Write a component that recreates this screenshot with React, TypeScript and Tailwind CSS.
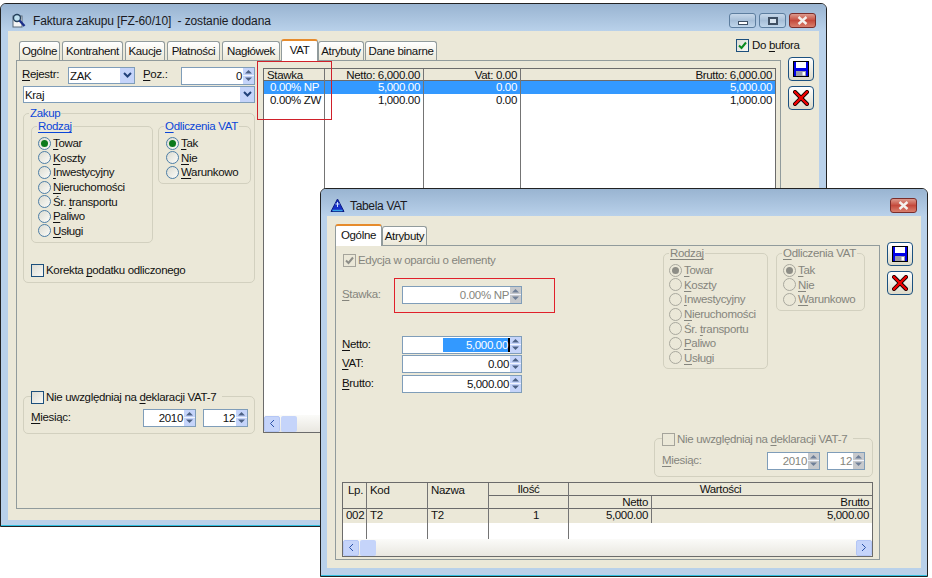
import React from "react";

const FONT = "font-['Liberation_Sans','Arial',sans-serif]";

function U({ children }: { children: React.ReactNode }) {
  return <span className="underline underline-offset-[2px]">{children}</span>;
}

function Radio({ checked, off }: { checked?: boolean; off?: boolean }) {
  return (
    <span
      className={`flex h-[13px] w-[13px] shrink-0 items-center justify-center rounded-full border ${
        off ? "border-[#a9a89e] bg-[#ebe8d8]" : "border-[#4d7ea6] bg-gradient-to-br from-[#dcdcd2] to-[#fbfbf8]"
      }`}
    >
      {checked && <span className={`h-[7px] w-[7px] rounded-full ${off ? "bg-[#8d8d86]" : "bg-[#0c7a1c]"}`} />}
    </span>
  );
}

function Check({ checked, off }: { checked?: boolean; off?: boolean }) {
  return (
    <span
      className={`flex h-[13px] w-[13px] shrink-0 items-center justify-center border ${
        off ? "border-[#a5a49b] bg-[#ebe8d8]" : "border-[#1c4f7c] bg-gradient-to-br from-[#dcdcd4] to-[#f8f8f4]"
      }`}
    >
      {checked && (
        <svg width="11" height="11" viewBox="0 0 11 11">
          <path d="M2 5.5 L4.5 8 L9 2.5" fill="none" stroke={off ? "#8e8e88" : "#0b8a1e"} strokeWidth="2" />
        </svg>
      )}
    </span>
  );
}

function SpinArrows({ off, flat }: { off?: boolean; flat?: boolean }) {
  return (
    <span className={`flex h-full w-[11px] shrink-0 flex-col ${flat ? "bg-[#c7c9cc]" : "bg-[#c5d4fa]"}`}>
      <svg width="11" height="15" viewBox="0 0 11 15">
        <path d="M5.5 2 L9 5.5 H2 Z" fill={off ? "#6f7f98" : "#4d6185"} />
        <path d="M0 7.5 H11" stroke="#f1f4fd" strokeWidth="1" />
        <path d="M5.5 13 L9 9.5 H2 Z" fill={off ? "#6f7f98" : "#4d6185"} />
      </svg>
    </span>
  );
}

function Spin({
  value,
  className,
  off,
  flat,
  selected,
}: {
  value: string;
  className: string;
  off?: boolean;
  flat?: boolean;
  selected?: boolean;
}) {
  return (
    <div className={`flex h-[18px] items-stretch border border-[#7f9db9] bg-white ${className}`}>
      <div className={`flex flex-1 items-center justify-end overflow-hidden ${off ? "text-[#85857d]" : ""}`}>
        {selected ? (
          <span className="flex h-[14px] w-[67px] items-center justify-end border-r-2 border-black bg-[#3399ff] text-white">
            {value}
          </span>
        ) : (
          <span className="pr-px">{value}</span>
        )}
      </div>
      <SpinArrows off={off} flat={flat} />
    </div>
  );
}

function Combo({ value, className }: { value: string; className: string }) {
  return (
    <div className={`flex h-[17px] items-stretch border border-[#7f9db9] bg-white ${className}`}>
      <span className="flex flex-1 items-center pl-px">{value}</span>
      <span className="flex w-[14px] items-center justify-center bg-[#c5d4fa]">
        <svg width="9" height="7" viewBox="0 0 9 7">
          <path d="M1 1 L4.5 4.5 L8 1" fill="none" stroke="#22427a" strokeWidth="2" />
        </svg>
      </span>
    </div>
  );
}

function Group({
  title,
  legend,
  className,
  blue,
  off,
  children,
}: {
  title?: React.ReactNode;
  legend?: React.ReactNode;
  className: string;
  blue?: boolean;
  off?: boolean;
  children?: React.ReactNode;
}) {
  return (
    <div className={`relative rounded-[5px] border border-[#d2d0bf] ${className}`}>
      {title && (
        <span
          className={`absolute -top-[7px] left-[5px] bg-[#ebe8d8] px-px leading-[13px] ${
            blue ? "text-[#0a46d8]" : off ? "text-[#85857d]" : ""
          }`}
        >
          {title}
        </span>
      )}
      {legend}
      {children}
    </div>
  );
}

function RadioList({
  items,
  off,
  marginClass,
}: {
  items: { label: React.ReactNode; checked?: boolean }[];
  off?: boolean;
  marginClass: string;
}) {
  return (
    <div className={`flex flex-col ${marginClass}`}>
      {items.map((it, i) => (
        <div key={i} className={`flex h-[14.6px] items-center gap-[2px] ${off ? "text-[#85857d]" : ""}`}>
          <Radio checked={it.checked} off={off} />
          <span>{it.label}</span>
        </div>
      ))}
    </div>
  );
}

const RODZAJ = [
  { label: <><U>T</U>owar</>, checked: true },
  { label: <><U>K</U>oszty</> },
  { label: <><U>I</U>nwestycyjny</> },
  { label: <><U>N</U>ieruchomości</> },
  { label: <>Śr. <U>t</U>ransportu</> },
  { label: <><U>P</U>aliwo</> },
  { label: <><U>U</U>sługi</> },
];
const ODLICZ = [
  { label: <><U>T</U>ak</>, checked: true },
  { label: <><U>N</U>ie</> },
  { label: <><U>W</U>arunkowo</> },
];

function Tab({ label, className, active }: { label: React.ReactNode; className: string; active?: boolean }) {
  return (
    <div
      className={
        active
          ? `relative z-10 -mb-px flex h-[22px] items-start justify-center rounded-t-[3px] border-x border-t-2 border-x-[#919b9c] border-t-[#e68b2c] bg-white pt-[2px] ${className}`
          : `flex h-[19px] items-center justify-center rounded-t-[3px] border-x border-t border-[#919b9c] bg-gradient-to-b from-white to-[#ebe8d8] ${className}`
      }
    >
      {label}
    </div>
  );
}

function WinButtons({ full }: { full?: boolean }) {
  return (
    <div className="flex gap-[3px]">
      {full && (
        <>
          <div className="flex h-[15px] w-[27px] items-end justify-center rounded-[3px] border border-[#5d7e9f] bg-gradient-to-b from-[#c7d8ea] via-[#a7bfd8] to-[#bfd5ea] pb-[2px]">
            <span className="h-[4px] w-[10px] border border-[#3e4f63] bg-white" />
          </div>
          <div className="flex h-[15px] w-[27px] items-center justify-center rounded-[3px] border border-[#5d7e9f] bg-gradient-to-b from-[#c7d8ea] via-[#a7bfd8] to-[#bfd5ea]">
            <span className="h-[8px] w-[10px] border-2 border-[#3e4f63] bg-[#d8e4f0]" />
          </div>
        </>
      )}
      <div className="flex h-[15px] w-[27px] items-center justify-center rounded-[3px] border border-[#7a2d2a] bg-gradient-to-b from-[#dc9a8e] via-[#c4493c] to-[#d97f6e]">
        <svg width="11" height="9" viewBox="0 0 11 9">
          <path d="M1.5 1 L9.5 8 M9.5 1 L1.5 8" stroke="#f4f1ee" strokeWidth="2.4" />
        </svg>
      </div>
    </div>
  );
}

function SaveButton() {
  return (
    <div className="flex h-[24px] w-[26px] items-center justify-center rounded-[4px] border border-[#1c5180] bg-gradient-to-b from-white to-[#dcd9c8]">
      <svg width="16" height="16" viewBox="0 0 16 16">
        <rect x="0.5" y="0.5" width="15" height="15" fill="#0000e8" stroke="#000" />
        <rect x="3" y="1" width="10" height="6" fill="#fff" />
        <rect x="3" y="10" width="10" height="5" fill="#9a9aa8" />
        <rect x="9.5" y="11" width="2.5" height="3.5" fill="#fff" />
      </svg>
    </div>
  );
}

function CloseButton() {
  return (
    <div className="flex h-[24px] w-[26px] items-center justify-center rounded-[4px] border border-[#1c5180] bg-gradient-to-b from-white to-[#dcd9c8]">
      <svg width="16" height="16" viewBox="0 0 16 16">
        <path d="M2 2 L14 14 M14 2 L2 14" stroke="#000" strokeWidth="4" strokeLinecap="square" />
        <path d="M2 2 L14 14 M14 2 L2 14" stroke="#f00000" strokeWidth="2.4" strokeLinecap="square" />
      </svg>
    </div>
  );
}

function ScrollBtn({ dir }: { dir: "l" | "r" }) {
  return (
    <span className="flex h-[16px] w-[16px] shrink-0 items-center justify-center rounded-[2px] border border-[#b4c6f5] bg-[#c5d4fa]">
      <svg width="6" height="9" viewBox="0 0 6 9">
        <path d={dir === "l" ? "M5 1 L1.5 4.5 L5 8" : "M1 1 L4.5 4.5 L1 8"} fill="none" stroke="#2b52a8" strokeWidth="1" />
      </svg>
    </span>
  );
}

const COL = "border-r border-[#747474]";
const MAIN_GRID = "grid grid-cols-[61px_99px_97px_1fr]";

function MainTable() {
  const rows = [
    { a: "0.00% NP", b: "5,000.00", c: "0.00", d: "5,000.00", sel: true },
    { a: "0.00% ZW", b: "1,000.00", c: "0.00", d: "1,000.00" },
  ];
  return (
    <div className="mt-[7px] flex h-[365px] w-[513px] flex-col overflow-hidden border border-[#6b6b6b] bg-white">
      <div className={`${MAIN_GRID} h-[12px] border-b border-[#6b6b6b] bg-[#ebe8d8] leading-[12px]`}>
        <span className={`${COL} pl-[3px]`}>Stawka</span>
        <span className={`${COL} pr-[3px] text-right`}>Netto: 6,000.00</span>
        <span className={`${COL} pr-[3px] text-right`}>Vat: 0.00</span>
        <span className="pr-[3px] text-right">Brutto: 6,000.00</span>
      </div>
      {rows.map((r) => (
        <div key={r.a} className={`${MAIN_GRID} h-[13px] leading-[13px] ${r.sel ? "bg-[#3399ff] text-white" : ""}`}>
          <span className={`${COL} pl-[6px]`}>{r.a}</span>
          <span className={`${COL} pr-[3px] text-right`}>{r.b}</span>
          <span className={`${COL} pr-[3px] text-right`}>{r.c}</span>
          <span className="pr-[3px] text-right">{r.d}</span>
        </div>
      ))}
      <div className={`${MAIN_GRID} flex-1`}>
        <span className={COL} />
        <span className={COL} />
        <span className={COL} />
        <span />
      </div>
      <div className="flex h-[17px] items-center gap-[1px] bg-gradient-to-b from-[#fbfbf9] to-[#e9e7e0]">
        <ScrollBtn dir="l" />
        <span className="h-[16px] w-[16px] rounded-[2px] bg-[#c5d4fa]" />
      </div>
    </div>
  );
}

function MainWindow() {
  const leftLegend = (
    <div className="absolute -top-[6px] left-[7px] flex items-center gap-[2px] bg-[#ebe8d8] pr-[6px] leading-[13px]">
      <Check />
      <span>
        Nie uwzględniaj na <U>d</U>eklaracji VAT-7
      </span>
    </div>
  );
  return (
    <div className="absolute left-0 top-[3px] flex h-[524px] w-[827px] flex-col overflow-hidden rounded-t-[6px] border border-[#222] bg-[#b9d1ea]">
      <div className="flex h-[27px] shrink-0 items-center bg-gradient-to-b from-[#99b4d1] to-[#b9d1ea] pl-[11px] pr-[10px] pt-[6px]">
        <svg width="14" height="15" viewBox="0 0 14 15">
          <rect x="1" y="3" width="9" height="11" fill="#f4f4f4" stroke="#5a6a7a" />
          <circle cx="5" cy="5" r="3.5" fill="#bfe0f0" stroke="#24405c" strokeWidth="1.4" />
          <path d="M7.5 7.5 L12.5 13" stroke="#1c2f8a" strokeWidth="2.4" />
        </svg>
        <span className="ml-[7px] whitespace-pre text-[12px] tracking-[-0.13px] text-[#1a1a22]">Faktura zakupu [FZ-60/10]  - zostanie dodana</span>
        <div className="ml-auto">
          <WinButtons full />
        </div>
      </div>
      <div className="mx-[7px] flex h-[489px] flex-col bg-[#ebe8d8]">
        <div className="flex h-[29px] shrink-0 items-end pl-[11px]">
          <Tab label="Ogólne" className="w-[41px]" />
          <Tab label="Kontrahent" className="ml-[2px] w-[61px]" />
          <Tab label="Kaucje" className="ml-[2px] w-[40px]" />
          <Tab label="Płatności" className="ml-[2px] w-[53px]" />
          <Tab label="Nagłówek" className="ml-[2px] w-[58px]" />
          <Tab label="VAT" className="ml-[1px] w-[37px]" active />
          <Tab label="Atrybuty" className="w-[46px]" />
          <Tab label="Dane binarne" className="ml-[1px] w-[72px]" />
          <div className="mb-[8px] ml-[299px] flex items-center gap-[3px]">
            <Check checked />
            <span>
              Do <U>b</U>ufora
            </span>
          </div>
        </div>
        <div className="flex">
          <div className="ml-[8px] flex h-[449px] w-[765px] border border-[#919b9c]">
            <div className="flex w-[246px] shrink-0 flex-col">
              <div className="ml-[5px] mt-[6px] flex h-[17px] items-center">
                <span className="mb-[3px] w-[46px]">
                  <U>R</U>ejestr:
                </span>
                <Combo value="ZAK" className="w-[67px]" />
                <span className="mb-[3px] ml-[8px] w-[38px]">
                  <U>P</U>oz.:
                </span>
                <Spin value="0" className="w-[74px]" />
              </div>
              <Combo value="Kraj" className="ml-[6px] mt-[2px] w-[232px]" />
              <Group title="Zakup" blue className="ml-[6px] mt-[10px] flex h-[170px] w-[232px] flex-col">
                <div className="ml-[7px] mt-[12px] flex gap-[5px]">
                  <Group title={<U>Rodzaj</U>} blue className="h-[117px] w-[122px]">
                    <RadioList items={RODZAJ} marginClass="ml-[6px] mt-[9px]" />
                  </Group>
                  <Group title={<><U>O</U>dliczenia VAT</>} blue className="h-[58px] w-[93px]">
                    <RadioList items={ODLICZ} marginClass="ml-[7px] mt-[9px]" />
                  </Group>
                </div>
                <div className="ml-[7px] mt-[20px] flex items-center gap-[2px]">
                  <Check />
                  <span>
                    Korekta <U>p</U>odatku odliczonego
                  </span>
                </div>
              </Group>
              <Group legend={leftLegend} className="ml-[6px] mt-[113px] h-[38px] w-[232px]">
                <div className="ml-[7px] mt-[12px] flex items-center">
                  <span className="mb-[3px] w-[112px]">
                    <U>M</U>iesiąc:
                  </span>
                  <Spin value="2010" className="w-[53px]" />
                  <Spin value="12" className="ml-[7px] w-[45px]" />
                </div>
              </Group>
            </div>
            <MainTable />
          </div>
          <div className="-mt-[3px] ml-[7px] flex flex-col gap-[5px]">
            <SaveButton />
            <CloseButton />
          </div>
        </div>
      </div>
      <div className="mt-auto h-px bg-[#2fc0e0]" />
    </div>
  );
}

const DIALOG_COLS = "grid grid-cols-[24px_61px_61px_80px_83px_1fr]";

function DialogTable() {
  return (
    <div className="ml-[6px] mt-[5px] flex h-[75px] w-[531px] flex-col overflow-hidden border border-[#6b6b6b] bg-white leading-[13px]">
      <div className={`${DIALOG_COLS} h-[26px] border-b border-[#6b6b6b] bg-[#ebe8d8]`}>
        <span className={`${COL} pl-[5px] pt-px`}>Lp.</span>
        <span className={`${COL} pl-[3px] pt-px`}>Kod</span>
        <span className={`${COL} pl-[3px] pt-px`}>Nazwa</span>
        <div className={`${COL} flex flex-col`}>
          <span className="h-[13px] border-b border-[#6b6b6b] text-center">Ilość</span>
        </div>
        <div className="col-span-2 flex flex-col">
          <span className="h-[13px] border-b border-[#6b6b6b] text-center">Wartości</span>
          <div className="grid flex-1 grid-cols-[83px_1fr]">
            <span className={`${COL} pr-[3px] text-right`}>Netto</span>
            <span className="pr-[3px] text-right">Brutto</span>
          </div>
        </div>
      </div>
      <div className={`${DIALOG_COLS} h-[14px] bg-[#ebe8d8]`}>
        <span className={`${COL} pl-[3px]`}>002</span>
        <span className={`${COL} pl-[3px]`}>T2</span>
        <span className={`${COL} pl-[3px]`}>T2</span>
        <span className={`${COL} pr-[29px] text-right`}>1</span>
        <span className={`${COL} pr-[3px] text-right`}>5,000.00</span>
        <span className="pr-[3px] text-right">5,000.00</span>
      </div>
      <div className={`${DIALOG_COLS} flex-1`}>
        <span className={COL} />
        <span className={COL} />
        <span className={COL} />
        <span className={COL} />
        <span />
        <span />
      </div>
      <div className="flex h-[17px] shrink-0 items-center gap-[1px] bg-gradient-to-b from-[#fbfbf9] to-[#e9e7e0]">
        <ScrollBtn dir="l" />
        <span className="h-[16px] w-[16px] rounded-[2px] bg-[#c5d4fa]" />
        <span className="ml-auto">
          <ScrollBtn dir="r" />
        </span>
      </div>
    </div>
  );
}

function Dialog() {
  const legend = (
    <div className="absolute -top-[6px] left-[7px] flex items-center gap-[2px] bg-[#ebe8d8] pr-[6px] leading-[13px] text-[#85857d]">
      <Check off />
      <span>
        Nie uwzględniaj na <U>d</U>eklaracji VAT-7
      </span>
    </div>
  );
  return (
    <div className="absolute left-[320px] top-[188px] z-20 flex h-[389px] w-[608px] flex-col overflow-hidden rounded-t-[6px] border border-[#222] bg-[#b9d1ea]">
      <div className="flex h-[27px] shrink-0 items-center bg-gradient-to-b from-[#99b4d1] to-[#b9d1ea] pl-[9px] pr-[10px] pt-[6px]">
        <svg width="15" height="15" viewBox="0 0 15 15">
          <path d="M7.5 1 L14 13.5 H1 Z" fill="#1830c8" stroke="#0b1a80" />
          <path d="M7.5 4 V9 M5.5 6 H9.5" stroke="#cfe0ff" strokeWidth="1" />
          <path d="M2.5 12.5 H12.5" stroke="#38a4e8" strokeWidth="1.4" />
        </svg>
        <span className="ml-[5px] text-[12px] text-[#1a1a22]">Tabela VAT</span>
        <div className="ml-auto">
          <WinButtons />
        </div>
      </div>
      <div className="ml-[6px] mr-[6px] flex h-[352px] flex-col bg-[#ebe8d8]">
        <div className="flex h-[29px] shrink-0 items-end pl-[8px]">
          <Tab label="Ogólne" className="w-[47px]" active />
          <Tab label="Atrybuty" className="w-[45px]" />
        </div>
        <div className="flex">
          <div className="ml-[8px] flex h-[315px] w-[545px] flex-col border border-[#919b9c]">
            <div className="flex">
              <div className="flex w-[327px] shrink-0 flex-col">
                <div className="ml-[7px] mt-[7px] flex items-center gap-[2px] text-[#85857d]">
                  <Check checked off />
                  <span>Edycja w oparciu o elementy</span>
                </div>
                <div className="ml-[6px] mt-[19px] flex items-center">
                  <span className="mb-[3px] w-[60px] text-[#85857d]">
                    <U>S</U>tawka:
                  </span>
                  <Spin value="0.00% NP" className="w-[120px]" off flat />
                </div>
                <div className="ml-[6px] mt-[32px] flex items-center">
                  <span className="mb-[3px] w-[60px]">
                    <U>N</U>etto:
                  </span>
                  <Spin value="5,000.00" className="w-[120px]" selected />
                </div>
                <div className="ml-[6px] mt-[1px] flex items-center">
                  <span className="mb-[3px] w-[60px]">
                    <U>V</U>AT:
                  </span>
                  <Spin value="0.00" className="w-[120px]" />
                </div>
                <div className="ml-[6px] mt-[2px] flex items-center">
                  <span className="mb-[3px] w-[60px]">
                    <U>B</U>rutto:
                  </span>
                  <Spin value="5,000.00" className="w-[120px]" />
                </div>
              </div>
              <div className="flex flex-col">
                <div className="mt-[7px] flex gap-[8px]">
                  <Group title={<U>Rodzaj</U>} off className="h-[116px] w-[105px]">
                    <RadioList items={RODZAJ} off marginClass="ml-[5px] mt-[9px]" />
                  </Group>
                  <Group title={<><U>O</U>dliczenia VAT</>} off className="h-[58px] w-[89px]">
                    <RadioList items={ODLICZ} off marginClass="ml-[6px] mt-[9px]" />
                  </Group>
                </div>
                <Group legend={legend} className="-ml-[9px] mt-[69px] h-[39px] w-[219px]">
                  <div className="ml-[7px] mt-[13px] flex items-center text-[#85857d]">
                    <span className="mb-[3px] w-[105px]">
                      <U>M</U>iesiąc:
                    </span>
                    <Spin value="2010" className="w-[53px]" off flat />
                    <Spin value="12" className="ml-[7px] w-[38px]" off flat />
                  </div>
                </Group>
              </div>
            </div>
            <DialogTable />
          </div>
          <div className="-mt-[3px] ml-[7px] flex flex-col gap-[5px]">
            <SaveButton />
            <CloseButton />
          </div>
        </div>
      </div>
      <div className="mt-auto h-px bg-[#2fc0e0]" />
    </div>
  );
}

export default function App() {
  return (
    <div className={`relative h-[578px] w-[932px] overflow-hidden whitespace-nowrap bg-white text-[11.5px] leading-[14px] tracking-[-0.33px] text-[#111] ${FONT}`}>
      <MainWindow />
      <Dialog />
      <div className="absolute left-[257px] top-[61px] z-10 h-[59px] w-[75px] border border-[#d0202a]" />
      <div className="absolute left-[394px] top-[278px] z-30 h-[35px] w-[161px] border border-[#e0202a]" />
    </div>
  );
}
